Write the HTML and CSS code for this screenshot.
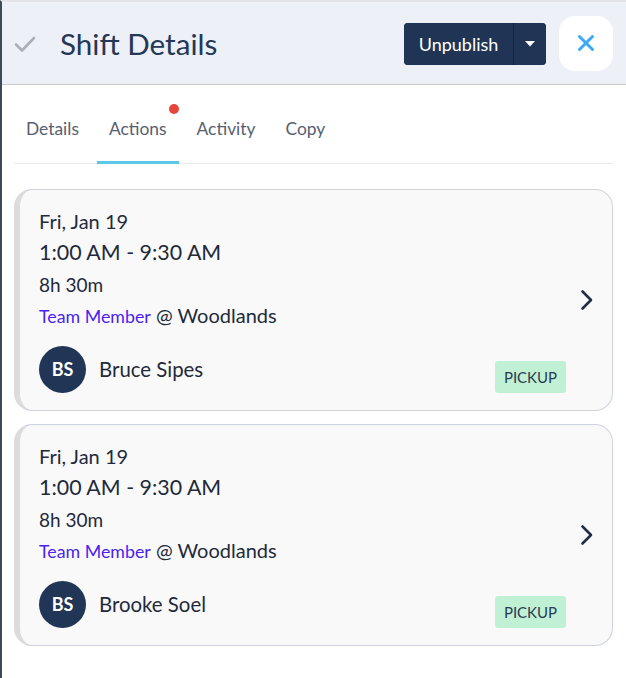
FILE: index.html
```html
<!DOCTYPE html>
<html>
<head>
<meta charset="utf-8">
<link rel="stylesheet" href="styles.css">
</head>
<body>
<div class="frame">
  <header class="header">
    <svg class="check" width="22" height="18" viewBox="0 0 22 18"><path d="M2 9.5 L8 15.5 L20 3" fill="none" stroke="#a9b0b9" stroke-width="2.6" stroke-linecap="round" stroke-linejoin="round"/></svg>
    <h1 class="title">Shift Details</h1>
    <div class="split">
      <button class="split-main">Unpublish</button>
      <button class="split-caret"><svg width="10" height="6" viewBox="0 0 10 6"><path d="M0 0 L10 0 L5 5.5 Z" fill="#ffffff"/></svg></button>
    </div>
    <button class="close"><svg width="18" height="18" viewBox="0 0 18 18"><path d="M2.5 2.5 L15.5 15.5 M15.5 2.5 L2.5 15.5" stroke="#3da8f4" stroke-width="3" stroke-linecap="round"/></svg></button>
  </header>
  <main class="content">
    <nav class="tabs">
      <div class="tab">Details</div>
      <div class="tab active">Actions<span class="dot"></span></div>
      <div class="tab">Activity</div>
      <div class="tab">Copy</div>
    </nav>
    <div class="cards">
      <div class="card">
        <div class="card-body">
          <div class="date">Fri, Jan 19</div>
          <div class="time">1:00 AM - 9:30 AM</div>
          <div class="dur">8h 30m</div>
          <div class="role"><span class="pos">Team Member</span> @ Woodlands</div>
          <div class="person">
            <div class="avatar">BS</div>
            <div class="name">Bruce Sipes</div>
            <div class="badge">PICKUP</div>
          </div>
        </div>
        <div class="chev"><svg width="14" height="22" viewBox="0 0 14 22"><path d="M2.5 2.5 L11 11 L2.5 19.5" fill="none" stroke="#1f2f47" stroke-width="2.6" stroke-linecap="round" stroke-linejoin="round"/></svg></div>
      </div>
      <div class="card">
        <div class="card-body">
          <div class="date">Fri, Jan 19</div>
          <div class="time">1:00 AM - 9:30 AM</div>
          <div class="dur">8h 30m</div>
          <div class="role"><span class="pos">Team Member</span> @ Woodlands</div>
          <div class="person">
            <div class="avatar">BS</div>
            <div class="name">Brooke Soel</div>
            <div class="badge">PICKUP</div>
          </div>
        </div>
        <div class="chev"><svg width="14" height="22" viewBox="0 0 14 22"><path d="M2.5 2.5 L11 11 L2.5 19.5" fill="none" stroke="#1f2f47" stroke-width="2.6" stroke-linecap="round" stroke-linejoin="round"/></svg></div>
      </div>
    </div>
  </main>
</div>
</body>
</html>
```

FILE: styles.css
```css
* { box-sizing: border-box; }
html, body { margin: 0; padding: 0; background: #ffffff; }
body { font-family: Lato, "Noto Sans", sans-serif; color: #1f2a3b; }

.frame {
  width: 626px;
  height: 678px;
  border-left: 2px solid #3e4a5c;
  border-top: 2px solid #e2e4e9;
  overflow: hidden;
}

.header {
  height: 83px;
  background: #edf0f7;
  border-bottom: 1px solid #c9c9cb;
  display: flex;
  align-items: center;
  padding: 0 13px 0 12px;
}
.check { flex: none; margin-top: 2px; }
.title {
  margin: 0 0 0 24px;
  font-weight: 400;
  font-size: 29.6px;
  color: #243756;
  flex: 1;
}
.split {
  display: flex;
  height: 42px;
  margin-top: 2px;
  border-radius: 4px;
  overflow: hidden;
  background: #203555;
}
.split button {
  border: 0;
  background: #203555;
  color: #fff;
  font-family: inherit;
  padding: 0;
}
.split-main { width: 110px; font-size: 18px; border-right: 1px solid #14253d !important; }
.split-caret { width: 32px; display: flex; align-items: center; justify-content: center; }
.close {
  margin-left: 13px;
  width: 54px;
  height: 55px;
  border: 0;
  border-radius: 16px;
  background: #ffffff;
  display: flex;
  align-items: center;
  justify-content: center;
  padding: 0;
}

.content { padding: 0 13px 0 12px; }

.tabs {
  display: flex;
  gap: 6px;
  height: 79px;
  border-bottom: 1px solid #e8e8ea;
  align-items: stretch;
}
.tab {
  position: relative;
  padding: 0 12px;
  font-size: 17.4px;
  color: #566070;
  display: flex;
  align-items: center;
  padding-top: 10px;
  border-bottom: 3px solid transparent;
  margin-bottom: -1px;
}
.tab.active { border-bottom-color: #5ac8e6; }
.dot {
  position: absolute;
  width: 10px;
  height: 10px;
  border-radius: 50%;
  background: #e5463b;
  top: 19px;
  right: 0px;
}

.cards {
  padding-top: 25px;
  display: flex;
  flex-direction: column;
  gap: 13px;
}
.card {
  height: 222px;
  display: flex;
  background: #f9f9fa;
  border: 1px solid #cdd3de;
  border-left: 6px solid #dcdcdc;
  border-radius: 18px;
}
.card-body {
  flex: 1;
  padding: 18px 0 0 19px;
}
.date { font-size: 20px; line-height: 26px; }
.time { font-size: 21.4px; line-height: 36px; }
.dur { font-size: 19px; line-height: 30px; }
.role { font-size: 20px; line-height: 30px; }
.pos { color: #4b1ff0; font-size: 17.8px; }
.person {
  display: flex;
  align-items: center;
  margin-top: 14px;
  height: 48px;
}
.avatar {
  width: 47px;
  height: 47px;
  border-radius: 50%;
  background: #213656;
  color: #ffffff;
  font-weight: 700;
  font-size: 18px;
  display: flex;
  align-items: center;
  justify-content: center;
}
.name { margin-left: 13px; font-size: 20.4px; }
.badge {
  margin-left: auto;
  align-self: flex-end;
  width: 71px;
  height: 32px;
  background: #c1f1d5;
  border-radius: 3px;
  font-size: 15px;
  color: #2a3a52;
  display: flex;
  align-items: center;
  justify-content: center;
}
.chev {
  width: 46px;
  display: flex;
  align-items: center;
  padding-left: 14px;
}
```
